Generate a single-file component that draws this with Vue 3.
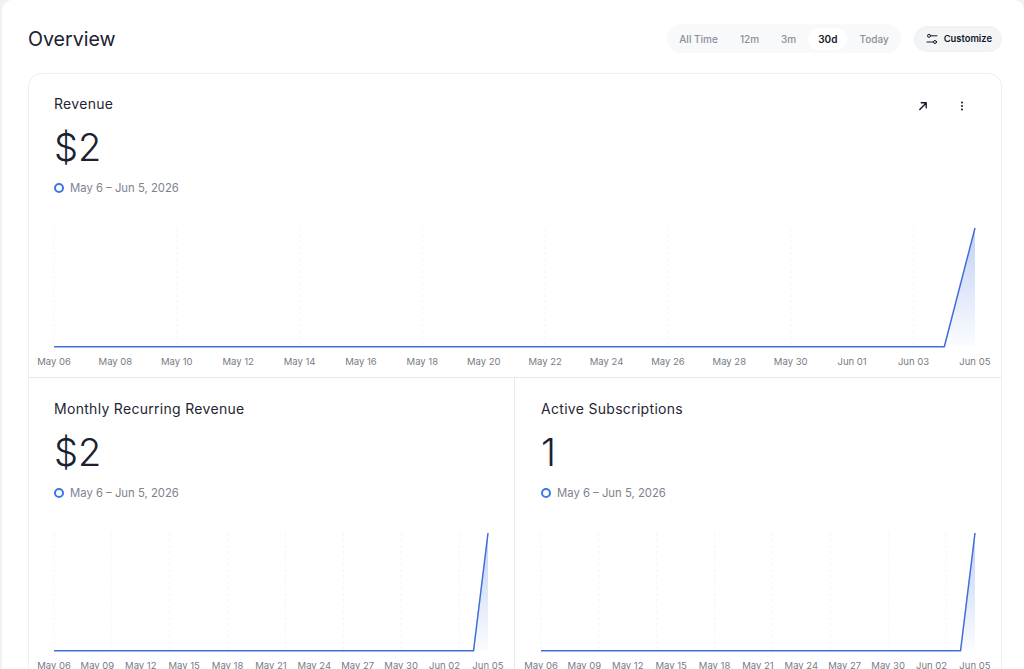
<script setup>
// Метки оси X для двух видов графика
const wideLabels = ['May 06', 'May 08', 'May 10', 'May 12', 'May 14', 'May 16', 'May 18', 'May 20', 'May 22', 'May 24', 'May 26', 'May 28', 'May 30', 'Jun 01', 'Jun 03', 'Jun 05']
const narrowLabels = ['May 06', 'May 09', 'May 12', 'May 15', 'May 18', 'May 21', 'May 24', 'May 27', 'May 30', 'Jun 02', 'Jun 05']

const ranges = ['All Time', '12m', '3m', '30d', 'Today']

const cards = [
  { title: 'Revenue', value: '$2', labels: wideLabels, wide: true },
  { title: 'Monthly Recurring Revenue', value: '$2', labels: narrowLabels },
  { title: 'Active Subscriptions', value: '1', labels: narrowLabels },
]

// Вертикальные линии сетки: каждые 4 дня из 30
const gridLines = [0, 4, 8, 12, 16, 20, 24, 28].map(day => (day / 30) * 100)
const spikeStart = (29 / 30) * 100
</script>

<template>
  <div class="page">
    <div class="panel">
      <header class="header">
        <h1 class="heading">Overview</h1>
        <div class="controls">
          <div class="ranges">
            <span v-for="range in ranges" :key="range" :class="['range', { active: range === '30d' }]">{{ range }}</span>
          </div>
          <button class="customize">
            <svg width="12" height="12" viewBox="0 0 12 12" fill="none" stroke="#111827" stroke-width="1" stroke-linecap="round">
              <circle cx="3" cy="2.8" r="1.5" />
              <path d="M5.2 2.8H11" />
              <circle cx="9" cy="9" r="1.5" />
              <path d="M1 9h5.8" />
            </svg>
            Customize
          </button>
        </div>
      </header>

      <section class="grid">
        <article v-for="(card, index) in cards" :key="card.title" :class="['card', { wide: card.wide }]">
          <div v-if="index === 0" class="actions">
            <svg width="12" height="12" viewBox="0 0 12 12" fill="none" stroke="#111827" stroke-width="1.4" stroke-linecap="round" stroke-linejoin="round">
              <path d="M2.8 9.4 9.2 3M4.2 2.8h5v5" />
            </svg>
            <svg width="12" height="12" viewBox="0 0 12 12" fill="#111827">
              <circle cx="6" cy="2.6" r="1" />
              <circle cx="6" cy="6" r="1" />
              <circle cx="6" cy="9.4" r="1" />
            </svg>
          </div>
          <h2 class="title">{{ card.title }}</h2>
          <div class="value">{{ card.value }}</div>
          <div class="period">
            <span class="dot"></span>
            May 6 – Jun 5, 2026
          </div>
          <div class="chart">
            <svg class="plot" viewBox="0 0 100 100" preserveAspectRatio="none">
              <defs>
                <linearGradient :id="'fill' + index" x1="0" y1="0" x2="0" y2="1">
                  <stop offset="0" stop-color="#3b6fe0" stop-opacity="0.32" />
                  <stop offset="1" stop-color="#3b6fe0" stop-opacity="0.02" />
                </linearGradient>
              </defs>
              <line
                v-for="x in gridLines"
                :key="x"
                :x1="x"
                :x2="x"
                y1="0"
                y2="100"
                class="grid-line"
                vector-effect="non-scaling-stroke"
              />
              <polygon :points="`${spikeStart},99 100,0 100,99`" :fill="`url(#fill${index})`" />
              <polyline
                :points="`0,99 ${spikeStart},99 100,0`"
                class="line"
                vector-effect="non-scaling-stroke"
              />
            </svg>
            <div class="labels">
              <span v-for="label in card.labels" :key="label" class="label">{{ label }}</span>
            </div>
          </div>
        </article>
      </section>
    </div>
  </div>
</template>

<style>
html, body {
  margin: 0;
  background: #f1f1f2;
}
</style>

<style scoped>
.page {
  height: 669px;
  overflow: hidden;
  padding-left: 2px;
  box-sizing: border-box;
  font-family: Inter, "Liberation Sans", sans-serif;
  color: #111827;
}

.panel {
  height: 100%;
  background: #fff;
  border-radius: 10px 10px 0 0;
  padding: 0 22px 0 26px;
  box-sizing: border-box;
  overflow: hidden;
}

.header {
  display: flex;
  justify-content: space-between;
  align-items: center;
  height: 73px;
  padding-top: 4px;
  box-sizing: border-box;
}

.heading {
  margin: 0;
  font-size: 19.6px;
  font-weight: 400;
  color: #1a2130;
}

.controls {
  display: flex;
  align-items: center;
  gap: 13px;
}

.ranges {
  display: flex;
  align-items: center;
  gap: 2px;
  height: 29px;
  padding: 0 2px;
  box-sizing: border-box;
  background: #f8f9fa;
  border-radius: 15px;
}

.range {
  display: flex;
  align-items: center;
  height: 22px;
  padding: 0 10px;
  border-radius: 11px;
  font-size: 10px;
  font-weight: 500;
  color: #8b909a;
}

.range.active {
  background: #fff;
  color: #111827;
  font-weight: 600;
}

.customize {
  display: flex;
  align-items: center;
  gap: 6px;
  height: 26px;
  padding: 0 9px 0 11px;
  background: #f3f4f6;
  border: 1px solid #eff0f2;
  border-radius: 13px;
  font-family: inherit;
  font-size: 9.4px;
  font-weight: 600;
  color: #111827;
}

.grid {
  display: grid;
  grid-template-columns: 485px 1fr;
  width: 974px;
  border: 1px solid #eeeff1;
  border-bottom: 0;
  border-radius: 14px 14px 0 0;
  box-sizing: border-box;
}

.card {
  position: relative;
  height: 304px;
  padding: 21px 26px 0 25px;
  box-sizing: border-box;
}

.card.wide {
  grid-column: 1 / -1;
  padding-top: 20px;
  border-bottom: 1px solid #e8e9ec;
}

.card:last-child {
  padding-left: 26px;
  border-left: 1px solid #e8e9ec;
}

.actions {
  position: absolute;
  top: 26px;
  right: 33px;
  display: flex;
  gap: 27px;
}

.title {
  margin: 0;
  font-size: 14px;
  font-weight: 400;
  line-height: 20px;
  letter-spacing: 0.3px;
  color: #1f2633;
}

.value {
  margin-top: 10px;
  font-size: 38px;
  font-weight: 300;
  line-height: 46px;
  color: #1a2130;
}

.period {
  display: flex;
  align-items: center;
  gap: 6px;
  margin-top: 10px;
  font-size: 11.3px;
  line-height: 16px;
  color: #7d838e;
}

.dot {
  width: 6px;
  height: 6px;
  border: 2px solid #3b78e7;
  border-radius: 50%;
}

.chart {
  margin-top: 32px;
}

.plot {
  display: block;
  width: 100%;
  height: 119px;
  overflow: visible;
}

.wide .plot {
  height: 120px;
}

.grid-line {
  stroke: #f4f5f6;
  stroke-width: 1;
  stroke-dasharray: 3 3;
}

.line {
  fill: none;
  stroke: #416fd8;
  stroke-width: 1.5;
  stroke-linejoin: round;
}

.labels {
  display: flex;
  justify-content: space-between;
  margin: 8px -17px 0;
}

.label {
  display: flex;
  justify-content: center;
  width: 34px;
  white-space: nowrap;
  font-size: 9.5px;
  line-height: 12px;
  color: #767b85;
}
</style>
